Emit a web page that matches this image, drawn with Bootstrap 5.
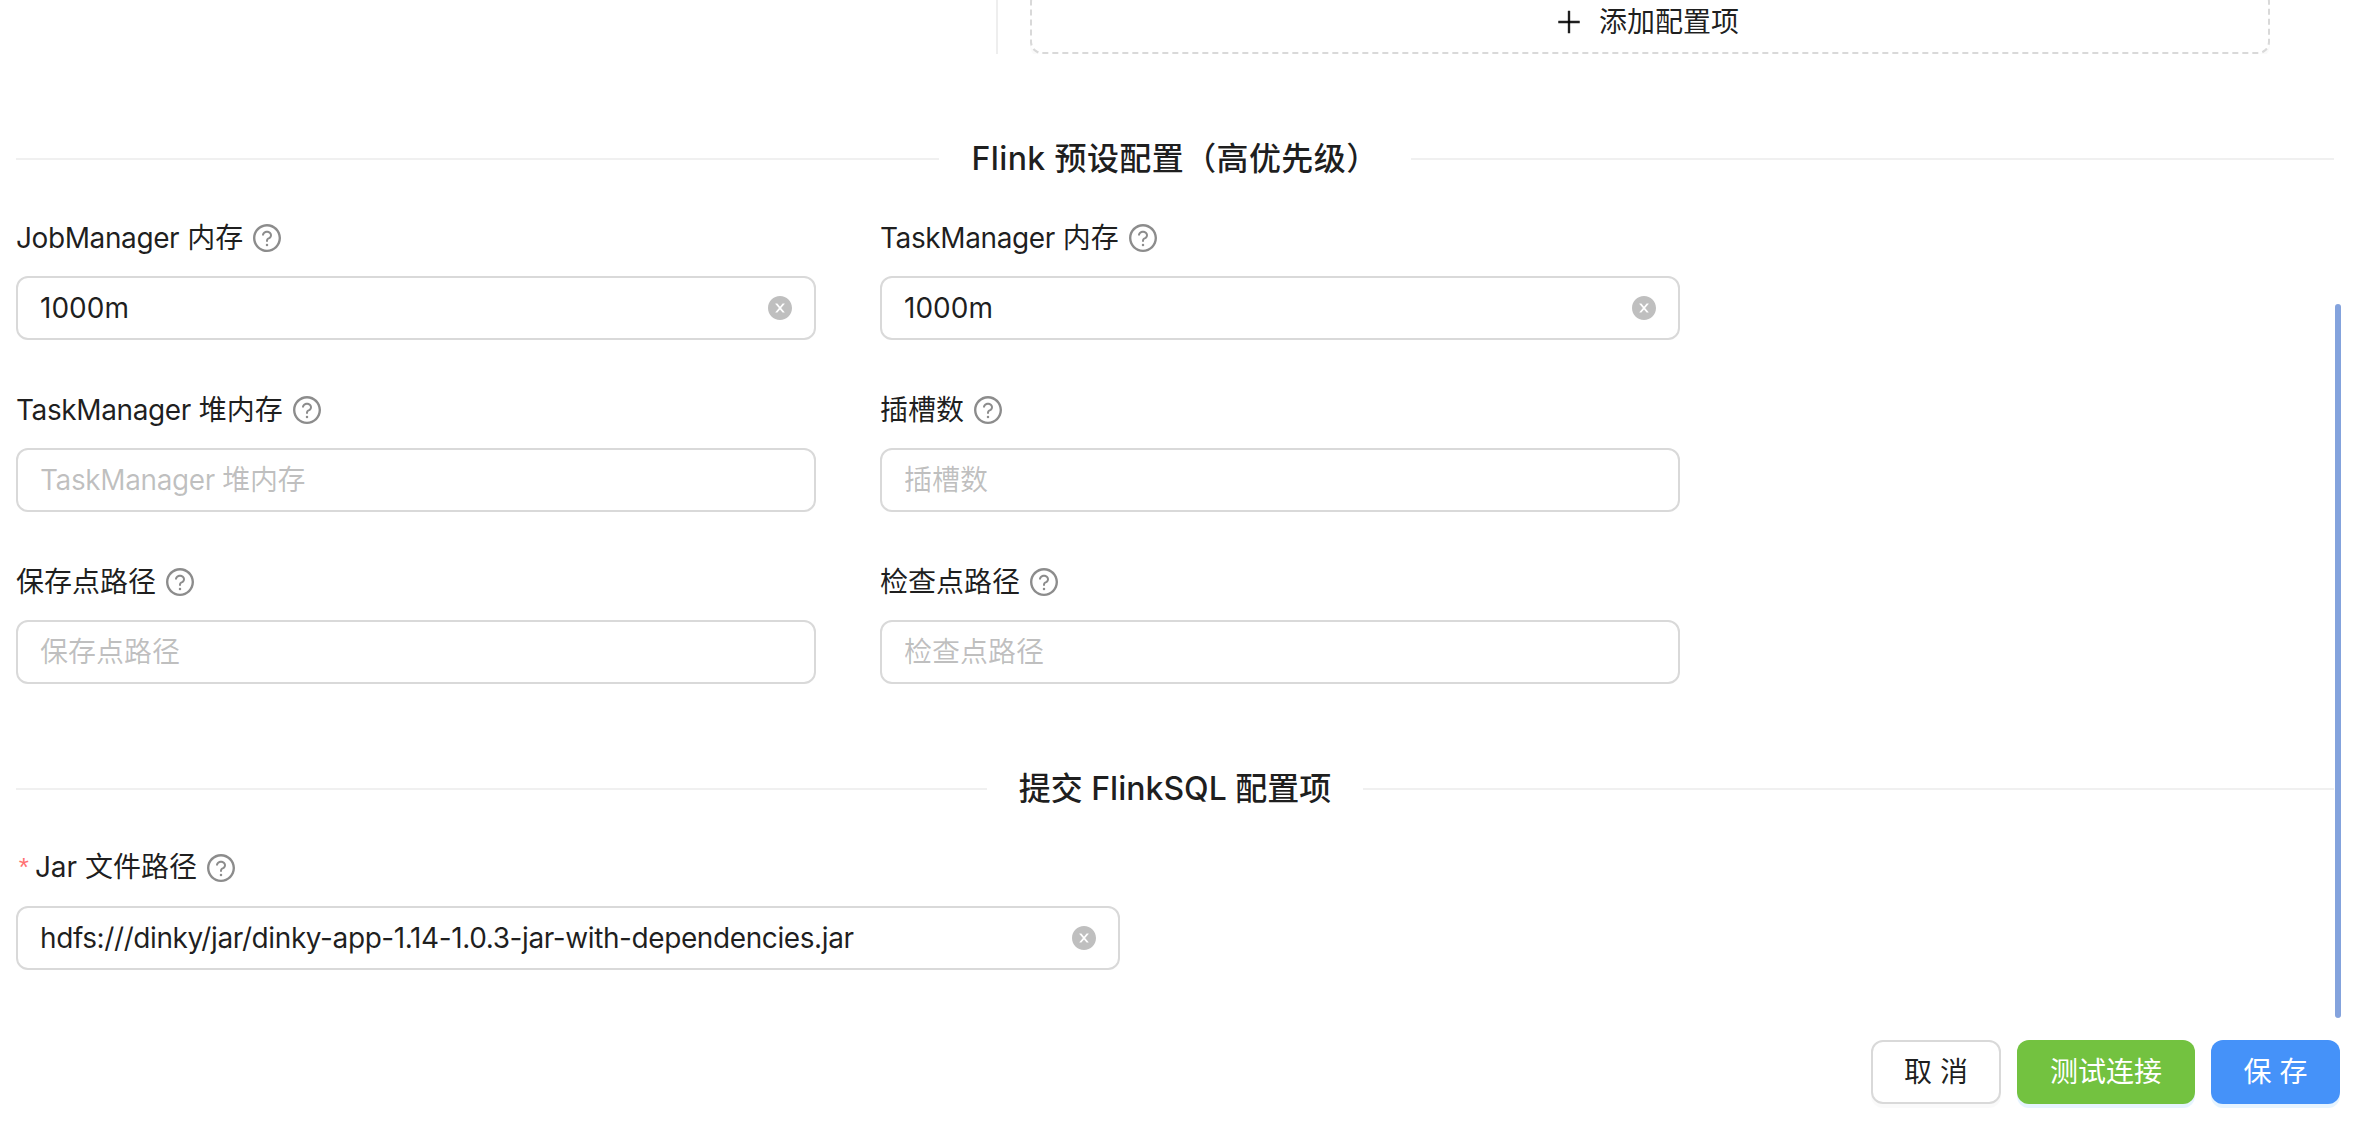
<!doctype html>
<html lang="zh">
<head>
<meta charset="utf-8">
<title>Flink 配置</title>
<link href="https://cdn.jsdelivr.net/npm/bootstrap@5.3.0/dist/css/bootstrap.min.css" rel="stylesheet">
<style>
html,body{height:100%;overflow:hidden;background:#fff}
body{font-family:Inter,"Noto Sans CJK SC",sans-serif;color:rgba(0,0,0,.88);font-size:28px}
.page-shell{height:1122px;padding:0 28px 0 16px;overflow:hidden}
.top-strip{height:54px;overflow:hidden;padding-left:980px;padding-right:64px}
.top-rule{width:2px;background:#eeeeee;height:54px;flex:none}
.add-wrap{flex:1;margin-left:32px;height:54px;display:flex;align-items:flex-end}
.add-item{width:100%;height:64px;flex:none;border:2px dashed #d9d9d9;border-radius:12px;box-shadow:0 4px 0 rgba(0,0,0,.02);display:flex;align-items:center;justify-content:center;gap:16px;font-size:28px;line-height:40px;background:#fff;color:rgba(0,0,0,.88);padding-right:6px}
.add-item svg{width:28px;height:28px}
.sect-rule{display:flex;align-items:center;font-size:32px;font-weight:500;line-height:48px;color:rgba(0,0,0,.88);gap:32px}
.sect-rule::before,.sect-rule::after{content:"";flex:1;border-top:2px solid #f0f0f0}
.sect-a{margin-top:81px;letter-spacing:.4px}
.sect-b{margin-top:81px}
.two-up{display:grid;grid-template-columns:800px 800px;column-gap:64px;row-gap:40px;margin-top:25px}
.field-lab{display:flex;align-items:center;height:60px;line-height:44px;font-size:28px;margin-bottom:8px;gap:10px}
.lat-tight{letter-spacing:-.4px}
.tip-ic{width:28px;height:28px;color:rgba(0,0,0,.45);flex:none}
.req-mark{color:#ff4d4f;font-size:26px;font-weight:300;font-family:"Liberation Mono",monospace;width:11px;opacity:.8}
.ant-box{height:64px;border:2px solid #d9d9d9;border-radius:12px;display:flex;align-items:center;padding:0 22px;background:#fff;gap:8px}
.ant-box input{flex:1;min-width:0;border:0;outline:0;padding:0;background:transparent;font:inherit;font-size:28px;color:rgba(0,0,0,.88)}
.ant-box input.lat-tight{letter-spacing:-.4px}
.ant-box input::placeholder{color:rgba(0,0,0,.25);opacity:1}
.clear-ic{width:24px;height:24px;color:rgba(0,0,0,.25);flex:none}
.jar-field{width:1104px;margin-top:25px}
.foot-bar{display:flex;justify-content:flex-end;gap:16px;margin-top:70px;margin-right:-6px}
.act-btn{height:64px;border-radius:12px;font-size:28px;line-height:1;padding:0 30px;font-family:inherit;border:2px solid transparent}
.act-cancel{width:130px;background:#fff;border-color:#d9d9d9;color:rgba(0,0,0,.88);box-shadow:0 4px 0 rgba(0,0,0,.02)}
.act-test{width:178px;background:#73c240;color:#fff;box-shadow:0 4px 0 rgba(5,145,255,.1)}
.act-save{width:129px;background:#4592f9;color:#fff;box-shadow:0 4px 0 rgba(5,145,255,.1)}
.scroll-thumb{position:absolute;left:2335px;top:304px;width:6px;height:714px;border-radius:6px;background:#84a3dd}
</style>
</head>
<body class="position-relative">
<div class="page-shell">
  <div class="top-strip d-flex">
    <div class="top-rule"></div>
    <div class="add-wrap">
      <div class="add-item"><svg viewBox="64 64 896 896" fill="currentColor"><path d="M482 152h60q8 0 8 8v704q0 8-8 8h-60q-8 0-8-8V160q0-8 8-8z"/><path d="M176 474h672q8 0 8 8v60q0 8-8 8H176q-8 0-8-8v-60q0-8 8-8z"/></svg><span>添加配置项</span></div>
    </div>
  </div>

  <div class="sect-rule sect-a"><span>Flink 预设配置（高优先级）</span></div>
  <div class="two-up">
    <div>
      <label class="field-lab"><span><span class="lat-tight">JobManager</span> 内存</span> <svg class="tip-ic" viewBox="64 64 896 896" fill="currentColor"><path d="M512 64C264.6 64 64 264.6 64 512s200.6 448 448 448 448-200.6 448-448S759.4 64 512 64zm0 820c-205.4 0-372-166.6-372-372s166.6-372 372-372 372 166.6 372 372-166.6 372-372 372z"/><path d="M623.6 316.7C593.6 290.4 554 276 512 276s-81.6 14.5-111.6 40.7C369.2 344 352 380.7 352 420v7.6c0 4.4 3.6 8 8 8h48c4.4 0 8-3.6 8-8V420c0-44.1 43.1-80 96-80s96 35.9 96 80c0 31.1-22 59.6-56.1 72.7-21.2 8.1-39.2 22.3-52.1 40.9-13.1 19-19.9 41.8-19.9 64.9V620c0 4.4 3.6 8 8 8h48c4.4 0 8-3.6 8-8v-22.7a48.3 48.3 0 0130.9-44.8c59-22.7 97.1-74.7 97.1-132.5.1-39.3-17.1-76-48.3-103.3zM472 732a40 40 0 1080 0 40 40 0 10-80 0z"/></svg></label>
      <div class="ant-box"><input value="1000m"><svg class="clear-ic" viewBox="64 64 896 896" fill="currentColor"><path d="M512 64C264.6 64 64 264.6 64 512s200.6 448 448 448 448-200.6 448-448S759.4 64 512 64zm165.4 618.2l-66-.3L512 563.4l-99.3 118.4-66.1.3c-4.4 0-8-3.5-8-8 0-1.9.7-3.7 1.9-5.2l130.1-155L340.5 359a8.32 8.32 0 01-1.9-5.2c0-4.4 3.6-8 8-8l66.1.3L512 464.6l99.3-118.4 66-.3c4.4 0 8 3.5 8 8 0 1.9-.7 3.7-1.9 5.2L553.5 514l130 155c1.2 1.5 1.9 3.3 1.9 5.2 0 4.4-3.6 8-8 8z"/></svg></div>
    </div>
    <div>
      <label class="field-lab"><span><span class="lat-tight">TaskManager</span> 内存</span> <svg class="tip-ic" viewBox="64 64 896 896" fill="currentColor"><path d="M512 64C264.6 64 64 264.6 64 512s200.6 448 448 448 448-200.6 448-448S759.4 64 512 64zm0 820c-205.4 0-372-166.6-372-372s166.6-372 372-372 372 166.6 372 372-166.6 372-372 372z"/><path d="M623.6 316.7C593.6 290.4 554 276 512 276s-81.6 14.5-111.6 40.7C369.2 344 352 380.7 352 420v7.6c0 4.4 3.6 8 8 8h48c4.4 0 8-3.6 8-8V420c0-44.1 43.1-80 96-80s96 35.9 96 80c0 31.1-22 59.6-56.1 72.7-21.2 8.1-39.2 22.3-52.1 40.9-13.1 19-19.9 41.8-19.9 64.9V620c0 4.4 3.6 8 8 8h48c4.4 0 8-3.6 8-8v-22.7a48.3 48.3 0 0130.9-44.8c59-22.7 97.1-74.7 97.1-132.5.1-39.3-17.1-76-48.3-103.3zM472 732a40 40 0 1080 0 40 40 0 10-80 0z"/></svg></label>
      <div class="ant-box"><input value="1000m"><svg class="clear-ic" viewBox="64 64 896 896" fill="currentColor"><path d="M512 64C264.6 64 64 264.6 64 512s200.6 448 448 448 448-200.6 448-448S759.4 64 512 64zm165.4 618.2l-66-.3L512 563.4l-99.3 118.4-66.1.3c-4.4 0-8-3.5-8-8 0-1.9.7-3.7 1.9-5.2l130.1-155L340.5 359a8.32 8.32 0 01-1.9-5.2c0-4.4 3.6-8 8-8l66.1.3L512 464.6l99.3-118.4 66-.3c4.4 0 8 3.5 8 8 0 1.9-.7 3.7-1.9 5.2L553.5 514l130 155c1.2 1.5 1.9 3.3 1.9 5.2 0 4.4-3.6 8-8 8z"/></svg></div>
    </div>
    <div>
      <label class="field-lab"><span><span class="lat-tight">TaskManager</span> 堆内存</span> <svg class="tip-ic" viewBox="64 64 896 896" fill="currentColor"><path d="M512 64C264.6 64 64 264.6 64 512s200.6 448 448 448 448-200.6 448-448S759.4 64 512 64zm0 820c-205.4 0-372-166.6-372-372s166.6-372 372-372 372 166.6 372 372-166.6 372-372 372z"/><path d="M623.6 316.7C593.6 290.4 554 276 512 276s-81.6 14.5-111.6 40.7C369.2 344 352 380.7 352 420v7.6c0 4.4 3.6 8 8 8h48c4.4 0 8-3.6 8-8V420c0-44.1 43.1-80 96-80s96 35.9 96 80c0 31.1-22 59.6-56.1 72.7-21.2 8.1-39.2 22.3-52.1 40.9-13.1 19-19.9 41.8-19.9 64.9V620c0 4.4 3.6 8 8 8h48c4.4 0 8-3.6 8-8v-22.7a48.3 48.3 0 0130.9-44.8c59-22.7 97.1-74.7 97.1-132.5.1-39.3-17.1-76-48.3-103.3zM472 732a40 40 0 1080 0 40 40 0 10-80 0z"/></svg></label>
      <div class="ant-box"><input class="lat-tight" placeholder="TaskManager 堆内存"></div>
    </div>
    <div>
      <label class="field-lab">插槽数 <svg class="tip-ic" viewBox="64 64 896 896" fill="currentColor"><path d="M512 64C264.6 64 64 264.6 64 512s200.6 448 448 448 448-200.6 448-448S759.4 64 512 64zm0 820c-205.4 0-372-166.6-372-372s166.6-372 372-372 372 166.6 372 372-166.6 372-372 372z"/><path d="M623.6 316.7C593.6 290.4 554 276 512 276s-81.6 14.5-111.6 40.7C369.2 344 352 380.7 352 420v7.6c0 4.4 3.6 8 8 8h48c4.4 0 8-3.6 8-8V420c0-44.1 43.1-80 96-80s96 35.9 96 80c0 31.1-22 59.6-56.1 72.7-21.2 8.1-39.2 22.3-52.1 40.9-13.1 19-19.9 41.8-19.9 64.9V620c0 4.4 3.6 8 8 8h48c4.4 0 8-3.6 8-8v-22.7a48.3 48.3 0 0130.9-44.8c59-22.7 97.1-74.7 97.1-132.5.1-39.3-17.1-76-48.3-103.3zM472 732a40 40 0 1080 0 40 40 0 10-80 0z"/></svg></label>
      <div class="ant-box"><input placeholder="插槽数"></div>
    </div>
    <div>
      <label class="field-lab">保存点路径 <svg class="tip-ic" viewBox="64 64 896 896" fill="currentColor"><path d="M512 64C264.6 64 64 264.6 64 512s200.6 448 448 448 448-200.6 448-448S759.4 64 512 64zm0 820c-205.4 0-372-166.6-372-372s166.6-372 372-372 372 166.6 372 372-166.6 372-372 372z"/><path d="M623.6 316.7C593.6 290.4 554 276 512 276s-81.6 14.5-111.6 40.7C369.2 344 352 380.7 352 420v7.6c0 4.4 3.6 8 8 8h48c4.4 0 8-3.6 8-8V420c0-44.1 43.1-80 96-80s96 35.9 96 80c0 31.1-22 59.6-56.1 72.7-21.2 8.1-39.2 22.3-52.1 40.9-13.1 19-19.9 41.8-19.9 64.9V620c0 4.4 3.6 8 8 8h48c4.4 0 8-3.6 8-8v-22.7a48.3 48.3 0 0130.9-44.8c59-22.7 97.1-74.7 97.1-132.5.1-39.3-17.1-76-48.3-103.3zM472 732a40 40 0 1080 0 40 40 0 10-80 0z"/></svg></label>
      <div class="ant-box"><input placeholder="保存点路径"></div>
    </div>
    <div>
      <label class="field-lab">检查点路径 <svg class="tip-ic" viewBox="64 64 896 896" fill="currentColor"><path d="M512 64C264.6 64 64 264.6 64 512s200.6 448 448 448 448-200.6 448-448S759.4 64 512 64zm0 820c-205.4 0-372-166.6-372-372s166.6-372 372-372 372 166.6 372 372-166.6 372-372 372z"/><path d="M623.6 316.7C593.6 290.4 554 276 512 276s-81.6 14.5-111.6 40.7C369.2 344 352 380.7 352 420v7.6c0 4.4 3.6 8 8 8h48c4.4 0 8-3.6 8-8V420c0-44.1 43.1-80 96-80s96 35.9 96 80c0 31.1-22 59.6-56.1 72.7-21.2 8.1-39.2 22.3-52.1 40.9-13.1 19-19.9 41.8-19.9 64.9V620c0 4.4 3.6 8 8 8h48c4.4 0 8-3.6 8-8v-22.7a48.3 48.3 0 0130.9-44.8c59-22.7 97.1-74.7 97.1-132.5.1-39.3-17.1-76-48.3-103.3zM472 732a40 40 0 1080 0 40 40 0 10-80 0z"/></svg></label>
      <div class="ant-box"><input placeholder="检查点路径"></div>
    </div>
  </div>

  <div class="sect-rule sect-b"><span>提交 FlinkSQL 配置项</span></div>
  <div class="jar-field">
    <label class="field-lab"><span><span class="req-mark d-inline-block">*</span> Jar 文件路径</span> <svg class="tip-ic" viewBox="64 64 896 896" fill="currentColor"><path d="M512 64C264.6 64 64 264.6 64 512s200.6 448 448 448 448-200.6 448-448S759.4 64 512 64zm0 820c-205.4 0-372-166.6-372-372s166.6-372 372-372 372 166.6 372 372-166.6 372-372 372z"/><path d="M623.6 316.7C593.6 290.4 554 276 512 276s-81.6 14.5-111.6 40.7C369.2 344 352 380.7 352 420v7.6c0 4.4 3.6 8 8 8h48c4.4 0 8-3.6 8-8V420c0-44.1 43.1-80 96-80s96 35.9 96 80c0 31.1-22 59.6-56.1 72.7-21.2 8.1-39.2 22.3-52.1 40.9-13.1 19-19.9 41.8-19.9 64.9V620c0 4.4 3.6 8 8 8h48c4.4 0 8-3.6 8-8v-22.7a48.3 48.3 0 0130.9-44.8c59-22.7 97.1-74.7 97.1-132.5.1-39.3-17.1-76-48.3-103.3zM472 732a40 40 0 1080 0 40 40 0 10-80 0z"/></svg></label>
    <div class="ant-box"><input class="lat-tight" value="hdfs:///dinky/jar/dinky-app-1.14-1.0.3-jar-with-dependencies.jar"><svg class="clear-ic" viewBox="64 64 896 896" fill="currentColor"><path d="M512 64C264.6 64 64 264.6 64 512s200.6 448 448 448 448-200.6 448-448S759.4 64 512 64zm165.4 618.2l-66-.3L512 563.4l-99.3 118.4-66.1.3c-4.4 0-8-3.5-8-8 0-1.9.7-3.7 1.9-5.2l130.1-155L340.5 359a8.32 8.32 0 01-1.9-5.2c0-4.4 3.6-8 8-8l66.1.3L512 464.6l99.3-118.4 66-.3c4.4 0 8 3.5 8 8 0 1.9-.7 3.7-1.9 5.2L553.5 514l130 155c1.2 1.5 1.9 3.3 1.9 5.2 0 4.4-3.6 8-8 8z"/></svg></div>
  </div>

  <div class="foot-bar">
    <button type="button" class="btn act-btn act-cancel">取 消</button>
    <button type="button" class="btn act-btn act-test">测试连接</button>
    <button type="button" class="btn act-btn act-save">保 存</button>
  </div>
</div>
<div class="scroll-thumb"></div>
<script src="https://cdn.jsdelivr.net/npm/bootstrap@5.3.0/dist/js/bootstrap.bundle.min.js"></script>
</body>
</html>
